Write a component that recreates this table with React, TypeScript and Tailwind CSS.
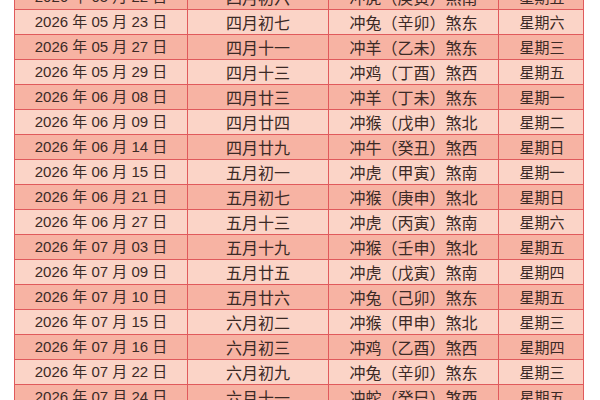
const rows: [string, string, string, string, string][] = [
  ["05", "22", "四月初六", "冲虎（庚寅）煞南", "星期五"],
  ["05", "23", "四月初七", "冲兔（辛卯）煞东", "星期六"],
  ["05", "27", "四月十一", "冲羊（乙未）煞东", "星期三"],
  ["05", "29", "四月十三", "冲鸡（丁酉）煞西", "星期五"],
  ["06", "08", "四月廿三", "冲羊（丁未）煞东", "星期一"],
  ["06", "09", "四月廿四", "冲猴（戊申）煞北", "星期二"],
  ["06", "14", "四月廿九", "冲牛（癸丑）煞西", "星期日"],
  ["06", "15", "五月初一", "冲虎（甲寅）煞南", "星期一"],
  ["06", "21", "五月初七", "冲猴（庚申）煞北", "星期日"],
  ["06", "27", "五月十三", "冲虎（丙寅）煞南", "星期六"],
  ["07", "03", "五月十九", "冲猴（壬申）煞北", "星期五"],
  ["07", "09", "五月廿五", "冲虎（戊寅）煞南", "星期四"],
  ["07", "10", "五月廿六", "冲兔（己卯）煞东", "星期五"],
  ["07", "15", "六月初二", "冲猴（甲申）煞北", "星期三"],
  ["07", "16", "六月初三", "冲鸡（乙酉）煞西", "星期四"],
  ["07", "22", "六月初九", "冲兔（辛卯）煞东", "星期三"],
  ["07", "24", "六月十一", "冲蛇（癸巳）煞西", "星期五"],
];

export default function App() {
  return (
    <div className="w-[600px] h-[400px] overflow-hidden bg-white">
      <div className="ml-[14px] -mt-[15px] w-[570px] border-l border-r border-[#e05a5c] text-[#3b2a26] font-['Liberation_Sans','Noto_Sans_CJK_SC',sans-serif]">
        {rows.map((r, i) => (
          <div
            key={i}
            className={`grid grid-cols-[173px_141px_170px_86px] h-[25px] border-b border-[#e05a5c] ${
              i % 2 === 0 ? "bg-[#f7b3a3]" : "bg-[#fbd4c7]"
            }`}
          >
            <div className="flex items-center justify-center border-r border-[#e05a5c] text-[15px] whitespace-pre">
              {`2026 年 ${r[0]} 月 ${r[1]} 日`}
            </div>
            <div className="flex items-center justify-center border-r border-[#e05a5c] text-[16px] font-['Noto_Sans_CJK_SC',sans-serif]">
              {r[2]}
            </div>
            <div className="flex items-center justify-center border-r border-[#e05a5c] text-[16px] font-['Noto_Sans_CJK_SC',sans-serif]">
              {r[3]}
            </div>
            <div className="flex items-center justify-center text-[15px] font-['Noto_Sans_CJK_SC',sans-serif]">
              {r[4]}
            </div>
          </div>
        ))}
      </div>
    </div>
  );
}
